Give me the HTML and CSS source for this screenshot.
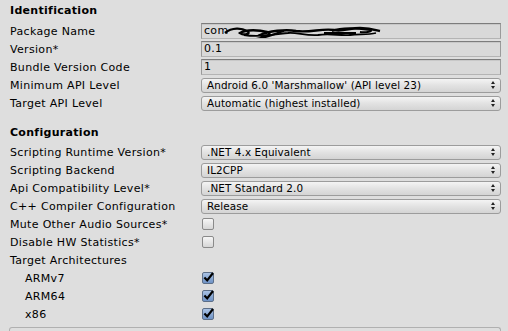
FILE: index.html
```html
<!DOCTYPE html>
<html>
<head>
<meta charset="utf-8">
<link rel="stylesheet" href="styles.css">
</head>
<body>
<div class="panel">
  <div class="section-title first">Identification</div>
  <div class="row"><div class="label">Package Name</div>
    <div class="control"><div class="field"><span>com</span>
      <svg class="scribble" width="160" height="16" viewBox="0 0 160 16">
        <path d="M1 9 C8 3 18 4 23 7 C28 10 20 12 16 9 C22 5 36 6 43 8 C50 10 40 14 36 11 C44 7 62 5 72 7 C86 9 98 4 110 6 C118 8 126 4 136 4 C146 4 152 6 156 7" fill="none" stroke="#000" stroke-width="2.4"/>
        <path d="M20 11 C36 14 54 10 64 9 C72 8 82 12 94 11 C106 9 116 12 126 11 C136 10 144 11 152 9" fill="none" stroke="#000" stroke-width="1.8"/>
        <path d="M32 15 C46 13 52 9 60 7 M108 7 C118 3 132 4 146 6 C150 7 142 9 136 8 M100 9 L132 9" fill="none" stroke="#000" stroke-width="2"/>
      </svg></div></div></div>
  <div class="row"><div class="label">Version*</div><div class="control"><div class="field">0.1</div></div></div>
  <div class="row"><div class="label">Bundle Version Code</div><div class="control"><div class="field">1</div></div></div>
  <div class="row"><div class="label">Minimum API Level</div><div class="control"><div class="popup">Android 6.0 'Marshmallow' (API level 23)</div></div></div>
  <div class="row"><div class="label">Target API Level</div><div class="control"><div class="popup">Automatic (highest installed)</div></div></div>

  <div class="section-title second">Configuration</div>
  <div class="row"><div class="label">Scripting Runtime Version*</div><div class="control"><div class="popup">.NET 4.x Equivalent</div></div></div>
  <div class="row"><div class="label">Scripting Backend</div><div class="control"><div class="popup">IL2CPP</div></div></div>
  <div class="row"><div class="label">Api Compatibility Level*</div><div class="control"><div class="popup">.NET Standard 2.0</div></div></div>
  <div class="row"><div class="label">C++ Compiler Configuration</div><div class="control"><div class="popup">Release</div></div></div>
  <div class="row"><div class="label">Mute Other Audio Sources*</div><div class="control"><div class="toggle"></div></div></div>
  <div class="row"><div class="label">Disable HW Statistics*</div><div class="control"><div class="toggle"></div></div></div>
  <div class="row"><div class="label">Target Architectures</div></div>
  <div class="row"><div class="label indent">ARMv7</div><div class="control"><div class="toggle on"><svg width="13" height="13" viewBox="0 0 13 13"><path d="M2.4 6.4 L5.2 9.4 L11 2" fill="none" stroke="#000" stroke-width="2.2"/></svg></div></div></div>
  <div class="row"><div class="label indent">ARM64</div><div class="control"><div class="toggle on"><svg width="13" height="13" viewBox="0 0 13 13"><path d="M2.4 6.4 L5.2 9.4 L11 2" fill="none" stroke="#000" stroke-width="2.2"/></svg></div></div></div>
  <div class="row"><div class="label indent">x86</div><div class="control"><div class="toggle on"><svg width="13" height="13" viewBox="0 0 13 13"><path d="M2.4 6.4 L5.2 9.4 L11 2" fill="none" stroke="#000" stroke-width="2.2"/></svg></div></div></div>
  <div class="next-box"></div>
</div>
</body>
</html>
```
FILE: styles.css
```css
html, body {
  margin: 0;
  padding: 0;
  background: #dedede;
}
body {
  width: 508px;
  height: 331px;
  overflow: hidden;
  font-family: "DejaVu Sans", Verdana, sans-serif;
  font-size: 11px;
  color: #000;
}
.panel {
  padding: 0 7px 0 10px;
}
.section-title {
  height: 18px;
  line-height: 18px;
  font-weight: bold;
  letter-spacing: 0.3px;
}
.section-title.first {
  margin-top: 2px;
  margin-bottom: 2px;
}
.section-title.second {
  margin-top: 12px;
  margin-bottom: 1px;
}
.row {
  display: flex;
  align-items: center;
  height: 18px;
}
.label {
  width: 191px;
  flex: none;
  white-space: nowrap;
  letter-spacing: 0.32px;
}
.label.indent {
  padding-left: 15px;
  width: 176px;
}
.control {
  flex: 1;
  display: flex;
  align-items: center;
}
.field {
  position: relative;
  flex: 1;
  height: 14px;
  line-height: 14px;
  padding-left: 2px;
  background: #d9d9d9;
  border: 1px solid #9a9a9a;
  border-top-color: #7c7c7c;
  border-bottom-color: #b4b4b4;
  box-shadow: inset 0 1px 0 #c8c8c8;
  overflow: hidden;
  white-space: nowrap;
  letter-spacing: 0.3px;
}
.scribble {
  position: absolute;
  left: 22px;
  top: 0;
}
.popup {
  position: relative;
  flex: 1;
  height: 13px;
  line-height: 13px;
  padding-left: 5px;
  border: 1px solid #9c9c9c;
  border-radius: 3px;
  background: linear-gradient(#f4f4f4, #e2e2e2 50%, #d4d4d4);
  white-space: nowrap;
  font-size: 10.4px;
  letter-spacing: 0.1px;
}
.popup::before {
  content: "";
  position: absolute;
  right: 5px;
  top: 2px;
  border-left: 2.5px solid transparent;
  border-right: 2.5px solid transparent;
  border-bottom: 3px solid #222;
}
.popup::after {
  content: "";
  position: absolute;
  right: 5px;
  top: 7px;
  border-left: 2.5px solid transparent;
  border-right: 2.5px solid transparent;
  border-top: 3px solid #222;
}
.toggle {
  width: 10px;
  height: 10px;
  margin-left: 1px;
  border: 1px solid #8a8a8a;
  border-radius: 2px;
  background: linear-gradient(#f6f6f6, #d6d6d6);
  position: relative;
}
.toggle.on {
  border-color: #5d6f88;
  background: linear-gradient(#a9c2e4, #6f93c6);
}
.toggle svg {
  position: absolute;
  left: -1px;
  top: -2px;
}
.next-box {
  margin-top: 4px;
  margin-left: -1px;
  height: 3px;
  border: 1px solid #b0b0b0;
  border-bottom: none;
  border-radius: 3px 3px 0 0;
}
```
